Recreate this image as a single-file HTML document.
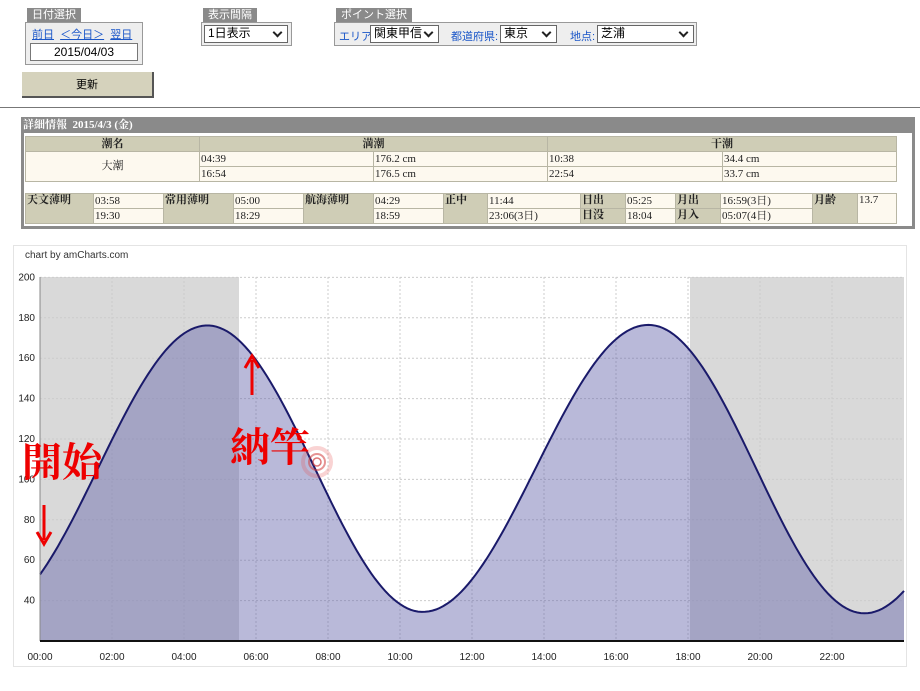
<!DOCTYPE html>
<html><head><meta charset="utf-8"><style>
*{margin:0;padding:0;box-sizing:border-box}
body{width:920px;height:691px;background:#fff;position:relative;font-family:"Liberation Sans","Noto Sans CJK JP",sans-serif;overflow:hidden}
.a{position:absolute}
.tab{background:#8a8a8a;color:#fff;font-size:11px;line-height:14px;padding:0 5px}
.box{border:1px solid #999;background:#eee}
.sel{background:#fff;border:1px solid #666;font-size:12px;line-height:15px;padding-left:3px}
.sel:after{content:"";position:absolute;right:6px;top:3px;width:5px;height:5px;border-right:2px solid #222;border-bottom:2px solid #222;transform:rotate(45deg)}
.lnk{color:#1a56c8;font-size:11px}
table{border-collapse:collapse;font-family:"Liberation Serif","Noto Serif CJK SC",serif;font-size:11px;table-layout:fixed}
td{border:1px solid #b8b6a4;background:#fdf9ef;height:15px;line-height:13px;padding:0 1px;color:#222}
td.h{background:#cfcdb6;font-weight:bold;text-align:center}
td.hl{background:#cfcdb6;font-weight:bold;vertical-align:top}
</style></head><body>
<div class="a tab" style="left:27px;top:8px;height:14px">日付選択</div>
<div class="a box" style="left:25px;top:22px;width:118px;height:43px"></div>
<div class="a lnk" style="left:32px;top:26px"><u>前日</u>&nbsp;&nbsp;<u>＜今日＞</u>&nbsp;&nbsp;<u>翌日</u></div>
<div class="a" style="left:30px;top:43px;width:108px;height:18px;background:#fff;border:1px solid #777;font-size:12px;text-align:center;line-height:16px">2015/04/03</div>
<div class="a" style="left:22px;top:72px;width:132px;height:26px;background:#d5d2bc;border-right:2px solid #555;border-bottom:2px solid #555;font-size:11px;text-align:center;line-height:26px">更新</div>

<div class="a tab" style="left:203px;top:8px">表示間隔</div>
<div class="a box" style="left:201px;top:22px;width:91px;height:24px"></div>
<div class="a sel" style="left:204px;top:25px;width:84px;height:18px">1日表示</div>

<div class="a tab" style="left:336px;top:8px">ポイント選択</div>
<div class="a box" style="left:334px;top:22px;width:363px;height:24px"></div>
<div class="a lnk" style="left:339px;top:28px">エリア:</div>
<div class="a sel" style="left:370px;top:25px;width:69px;height:18px">関東甲信</div>
<div class="a lnk" style="left:451px;top:28px">都道府県:</div>
<div class="a sel" style="left:500px;top:25px;width:57px;height:18px">東京</div>
<div class="a lnk" style="left:570px;top:28px">地点:</div>
<div class="a sel" style="left:597px;top:25px;width:97px;height:18px">芝浦</div>

<div class="a" style="left:0;top:107px;width:920px;height:1px;background:#777"></div>

<div class="a" style="left:21px;top:117px;width:894px;height:112px;background:#8a8a8a"></div>
<div class="a" style="left:24px;top:133px;width:888px;height:93px;background:#fff"></div>
<div class="a" style="left:23px;top:118px;color:#fff;font-family:'Liberation Serif','Noto Serif CJK SC',serif;font-size:11px;font-weight:bold;line-height:14px">詳細情報&nbsp; 2015/4/3 (金)</div>
<table class="a" style="left:25px;top:136px;width:871px">
<colgroup><col style="width:174px"><col style="width:174px"><col style="width:174px"><col style="width:175px"><col style="width:174px"></colgroup>
<tr><td class="h">潮名</td><td class="h" colspan="2">満潮</td><td class="h" colspan="2">干潮</td></tr>
<tr><td rowspan="2" style="text-align:center">大潮</td><td>04:39</td><td>176.2 cm</td><td>10:38</td><td>34.4 cm</td></tr>
<tr><td>16:54</td><td>176.5 cm</td><td>22:54</td><td>33.7 cm</td></tr>
</table>
<table class="a" style="left:25px;top:193px;width:871px">
<colgroup><col style="width:68px"><col style="width:70px"><col style="width:70px"><col style="width:70px"><col style="width:70px"><col style="width:70px"><col style="width:44px"><col style="width:93px"><col style="width:45px"><col style="width:50px"><col style="width:45px"><col style="width:92px"><col style="width:45px"><col style="width:39px"></colgroup>
<tr><td class="hl" rowspan="2">天文薄明</td><td>03:58</td><td class="hl" rowspan="2">常用薄明</td><td>05:00</td><td class="hl" rowspan="2">航海薄明</td><td>04:29</td><td class="hl" rowspan="2">正中</td><td>11:44</td><td class="hl">日出</td><td>05:25</td><td class="hl">月出</td><td>16:59(3日)</td><td class="hl" rowspan="2">月齢</td><td rowspan="2" style="vertical-align:top">13.7</td></tr>
<tr><td>19:30</td><td>18:29</td><td>18:59</td><td>23:06(3日)</td><td class="hl">日没</td><td>18:04</td><td class="hl">月入</td><td>05:07(4日)</td></tr>
</table>

<div class="a" style="left:13px;top:245px;width:894px;height:422px;border:1px solid #e4e4e4"></div>
<div class="a" style="left:25px;top:250px;font-size:10px;color:#333">chart by amCharts.com</div>
<svg class="a" style="left:0;top:0" width="920" height="691" id="ch">
<rect x="40" y="277" width="199" height="364" fill="#d9d9d9"/>
<rect x="690" y="277" width="214" height="364" fill="#d9d9d9"/>
<g id="grid" stroke="#ccc" stroke-dasharray="2,2" stroke-width="1"></g>
<path id="area" fill="rgba(100,100,170,0.45)"/>
<path id="line" fill="none" stroke="#1a1a6a" stroke-width="2"/>
<line x1="40" y1="277" x2="40" y2="641" stroke="#888"/>
<line x1="40" y1="641" x2="904" y2="641" stroke="#111" stroke-width="2"/>
<g id="lbl" font-family="Liberation Sans, sans-serif" font-size="10" fill="#222"></g>
<circle cx="317" cy="462" r="14" fill="none" stroke="rgba(230,80,80,0.25)" stroke-width="4"/>
<circle cx="317" cy="462" r="8" fill="none" stroke="rgba(210,60,60,0.55)" stroke-width="2"/>
<circle cx="317" cy="462" r="4" fill="none" stroke="rgba(210,60,60,0.7)" stroke-width="1.5"/>
<line x1="252" y1="395" x2="252" y2="360" stroke="#e00" stroke-width="3"/>
<path d="M245 368 L252 356 L259 368" fill="none" stroke="#e00" stroke-width="3"/>
<line x1="44" y1="505" x2="44" y2="540" stroke="#e00" stroke-width="3"/>
<path d="M37 532 L44 544 L51 532" fill="none" stroke="#e00" stroke-width="3"/>
<text x="22" y="476" font-family="Noto Serif CJK SC, serif" font-size="40" font-weight="bold" fill="#e00">開始</text>
<text x="230" y="461" font-family="Noto Serif CJK SC, serif" font-size="40" font-weight="bold" fill="#e00">納竿</text>
</svg>
<script>
var X=function(h){return 40+36*h},Y=function(v){return 641-(v-20)*2.02};
var ex=[[-1.45,34],[4.65,176.2],[10.63,34.4],[16.9,176.5],[22.9,33.7],[29,176]];
function val(t){for(var i=0;i<ex.length-1;i++){var a=ex[i],b=ex[i+1];if(t>=a[0]&&t<=b[0]){var p=(t-a[0])/(b[0]-a[0]);return a[1]+(b[1]-a[1])*(1-Math.cos(Math.PI*p))/2;}}return 40;}
var d="";for(var t=0;t<=24.001;t+=0.1){d+=(t==0?"M":"L")+X(t).toFixed(1)+" "+Y(val(t)).toFixed(1);}
document.getElementById("line").setAttribute("d",d);
document.getElementById("area").setAttribute("d",d+"L904 641 L40 641Z");
var g=document.getElementById("grid"),l=document.getElementById("lbl"),s="",s2="";
for(var v=40;v<=200;v+=20){s+='<line x1="40" x2="904" y1="'+Y(v)+'" y2="'+Y(v)+'"/>';s2+='<text x="35" y="'+(Y(v)+3)+'" text-anchor="end">'+v+'</text>';}
for(var h=0;h<=22;h+=2){s+='<line y1="277" y2="641" x1="'+X(h)+'" x2="'+X(h)+'"/>';s2+='<text x="'+X(h)+'" y="660" text-anchor="middle">'+(h<10?"0":"")+h+':00</text>';}
g.innerHTML=s;l.innerHTML=s2;
</script>
</body></html>
